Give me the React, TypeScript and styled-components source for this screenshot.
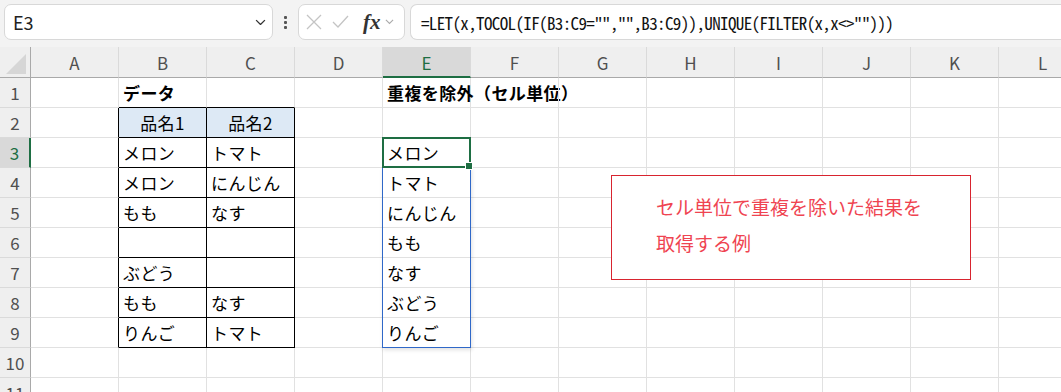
import React from 'react';
import styled, { createGlobalStyle } from 'styled-components';

const GlobalStyle = createGlobalStyle`
  body {
    margin: 0;
    overflow: hidden;
    background: #ffffff;
    font-family: "Noto Sans CJK JP", "Noto Sans", sans-serif;
  }
`;

const COLS = ['A', 'B', 'C', 'D', 'E', 'F', 'G', 'H', 'I', 'J', 'K', 'L'];
const ROWS = [1, 2, 3, 4, 5, 6, 7, 8, 9, 10, 11];

const GRID = '#e1e1e1';
const INK = '#000000';

const Page = styled.div`
  width: 1061px;
  height: 392px;
  overflow: hidden;
`;

const Toolbar = styled.div`
  height: 47px;
  box-sizing: border-box;
  background: #f3f3f3;
  display: flex;
  align-items: flex-start;
  padding: 4px 0 0 4px;
`;

const Box = styled.div`
  height: 36px;
  box-sizing: border-box;
  background: #ffffff;
  border: 1px solid #d8d8d8;
  border-radius: 7px;
  display: flex;
  align-items: center;
`;

const NameBox = styled(Box)`
  width: 269px;
  padding: 0 6px 0 8px;
  justify-content: space-between;
  font-size: 18px;
  color: #222;
`;

const Dots = styled.div`
  width: 25px;
  height: 36px;
  display: flex;
  flex-direction: column;
  align-items: center;
  justify-content: center;
  gap: 2px;

  span {
    width: 3px;
    height: 3px;
    background: #555;
    border-radius: 1px;
  }
`;

const FxBox = styled(Box)`
  width: 107px;
  padding: 0 4px 0 7px;
  gap: 10px;
`;

const Fx = styled.span`
  font-family: "Liberation Serif", "DejaVu Serif", serif;
  font-style: italic;
  font-weight: bold;
  font-size: 21px;
  color: #333;
  margin-left: 4px;
  margin-right: -6px;
`;

const FormulaBox = styled(Box)`
  flex: 1;
  margin-left: 5px;
  border-right: none;
  border-radius: 7px 0 0 7px;
  padding-left: 10px;
  font-family: "Noto Sans Mono CJK JP", "DejaVu Sans Mono", monospace;
  font-size: 17px;
  letter-spacing: -0.63px;
  color: #111;
  white-space: nowrap;
`;

const Sheet = styled.div`
  position: relative;
  display: grid;
  grid-template-columns: 31px repeat(12, 88px);
  grid-template-rows: 31px repeat(11, 30px);
`;

const Corner = styled.div`
  position: relative;
  background: #efefef;
  border-right: 1px solid #a9a9a9;
  border-bottom: 1px solid #a9a9a9;

  &::after {
    content: '';
    position: absolute;
    right: 4px;
    bottom: 3px;
    width: 0;
    height: 0;
    border-left: 20px solid transparent;
    border-bottom: 20px solid #d6d6d6;
  }
`;

const ColHead = styled.div<{ $sel?: boolean }>`
  box-sizing: border-box;
  background: ${(p) => (p.$sel ? '#d9d9d9' : '#efefef')};
  border-right: 1px solid #dadada;
  border-bottom: ${(p) => (p.$sel ? '2px solid #1e6e43' : '1px solid #a9a9a9')};
  display: flex;
  align-items: center;
  justify-content: center;
  font-size: 17px;
  color: ${(p) => (p.$sel ? '#1e6e43' : '#505050')};
  padding-top: ${(p) => (p.$sel ? '1px' : '0')};
`;

const RowHead = styled.div<{ $sel?: boolean }>`
  box-sizing: border-box;
  background: ${(p) => (p.$sel ? '#d9d9d9' : '#efefef')};
  border-right: ${(p) => (p.$sel ? '2px solid #1e6e43' : '1px solid #a9a9a9')};
  border-bottom: 1px solid #dadada;
  display: flex;
  align-items: center;
  justify-content: center;
  font-size: 17px;
  color: ${(p) => (p.$sel ? '#1e6e43' : '#505050')};
`;

const Cell = styled.div<{ $right: string; $bottom: string; $fill?: string; $center?: boolean; $bold?: boolean }>`
  box-sizing: border-box;
  border-right: 1px solid ${(p) => p.$right};
  border-bottom: 1px solid ${(p) => p.$bottom};
  background: ${(p) => p.$fill || 'transparent'};
  display: flex;
  align-items: center;
  justify-content: ${(p) => (p.$center ? 'center' : 'flex-start')};
  padding-left: ${(p) => (p.$center ? '0' : '4px')};
  font-size: 17px;
  font-weight: ${(p) => (p.$bold ? 700 : 400)};
  letter-spacing: 0.4px;
  color: #000;
  white-space: nowrap;
  overflow: visible;
`;

const Selection = styled.div`
  position: absolute;
  left: 382px;
  top: 90px;
  width: 89px;
  height: 31px;
  box-sizing: border-box;
  border: 2px solid #1e6e43;
  pointer-events: none;

  &::after {
    content: '';
    position: absolute;
    right: -4px;
    bottom: -4px;
    width: 6px;
    height: 6px;
    background: #1e6e43;
    border: 1px solid #ffffff;
  }
`;

const Spill = styled.div`
  position: absolute;
  left: 382px;
  top: 120px;
  width: 89px;
  height: 181px;
  box-sizing: border-box;
  border: 1px solid #2f68c8;
  box-shadow: 1px 2px 4px rgba(0, 0, 0, 0.12);
  pointer-events: none;
`;

const Note = styled.div`
  position: absolute;
  left: 611px;
  top: 128px;
  width: 360px;
  height: 105px;
  box-sizing: border-box;
  border: 1px solid #d8242f;
  background: #ffffff;
  padding: 13px 0 0 44px;
  font-size: 19px;
  line-height: 36px;
  color: #ef4451;
`;

type CellData = { text: string; center?: boolean; bold?: boolean; fill?: string };

const data: Record<string, CellData> = {
  B1: { text: 'データ', bold: true },
  E1: { text: '重複を除外（セル単位）', bold: true },
  B2: { text: '品名1', center: true, fill: '#dde9f5' },
  C2: { text: '品名2', center: true, fill: '#dde9f5' },
  B3: { text: 'メロン' }, C3: { text: 'トマト' }, E3: { text: 'メロン' },
  B4: { text: 'メロン' }, C4: { text: 'にんじん' }, E4: { text: 'トマト' },
  B5: { text: 'もも' }, C5: { text: 'なす' }, E5: { text: 'にんじん' },
  E6: { text: 'もも' },
  B7: { text: 'ぶどう' }, E7: { text: 'なす' },
  B8: { text: 'もも' }, C8: { text: 'なす' }, E8: { text: 'ぶどう' },
  B9: { text: 'りんご' }, C9: { text: 'トマト' }, E9: { text: 'りんご' },
};

// B2:C9 has thin black borders
const inTable = (r: number, c: number) => r >= 2 && r <= 9 && c >= 1 && c <= 2;

const Chevron = ({ size = 10, color = '#444' }: { size?: number; color?: string }) => (
  <svg width={size} height={size * 0.6} viewBox="0 0 10 6">
    <path d="M1 1 L5 5 L9 1" fill="none" stroke={color} strokeWidth="1.2" />
  </svg>
);

const App: React.FC = () => {
  return (
    <Page>
      <GlobalStyle />
      <Toolbar>
        <NameBox>
          <span>E3</span>
          <Chevron size={11} color="#333" />
        </NameBox>
        <Dots>
          <span />
          <span />
          <span />
        </Dots>
        <FxBox>
          <svg width="16" height="16" viewBox="0 0 16 16">
            <path d="M1 1 L15 15 M15 1 L1 15" stroke="#c4c4c4" strokeWidth="1.3" fill="none" />
          </svg>
          <svg width="17" height="14" viewBox="0 0 17 14">
            <path d="M1 7 L6 12 L16 1" stroke="#c4c4c4" strokeWidth="1.3" fill="none" />
          </svg>
          <Fx>fx</Fx>
          <Chevron size={9} color="#aaa" />
        </FxBox>
        <FormulaBox>=LET(x,TOCOL(IF(B3:C9="","",B3:C9)),UNIQUE(FILTER(x,x&lt;&gt;"")))</FormulaBox>
      </Toolbar>

      <Sheet>
        <Corner />
        {COLS.map((c) => (
          <ColHead key={c} $sel={c === 'E'}>
            {c}
          </ColHead>
        ))}
        {ROWS.map((r) => (
          <React.Fragment key={r}>
            <RowHead $sel={r === 3}>{r}</RowHead>
            {COLS.map((c, ci) => {
              const cell = data[`${c}${r}`];
              const right = inTable(r, ci) || inTable(r, ci + 1) ? INK : GRID;
              const bottom = inTable(r, ci) || inTable(r + 1, ci) ? INK : GRID;
              return (
                <Cell
                  key={c}
                  $right={right}
                  $bottom={bottom}
                  $fill={cell?.fill}
                  $center={cell?.center}
                  $bold={cell?.bold}
                >
                  {cell?.text}
                </Cell>
              );
            })}
          </React.Fragment>
        ))}
        <Spill />
        <Selection />
        <Note>
          セル単位で重複を除いた結果を
          <br />
          取得する例
        </Note>
      </Sheet>
    </Page>
  );
};

export default App;
